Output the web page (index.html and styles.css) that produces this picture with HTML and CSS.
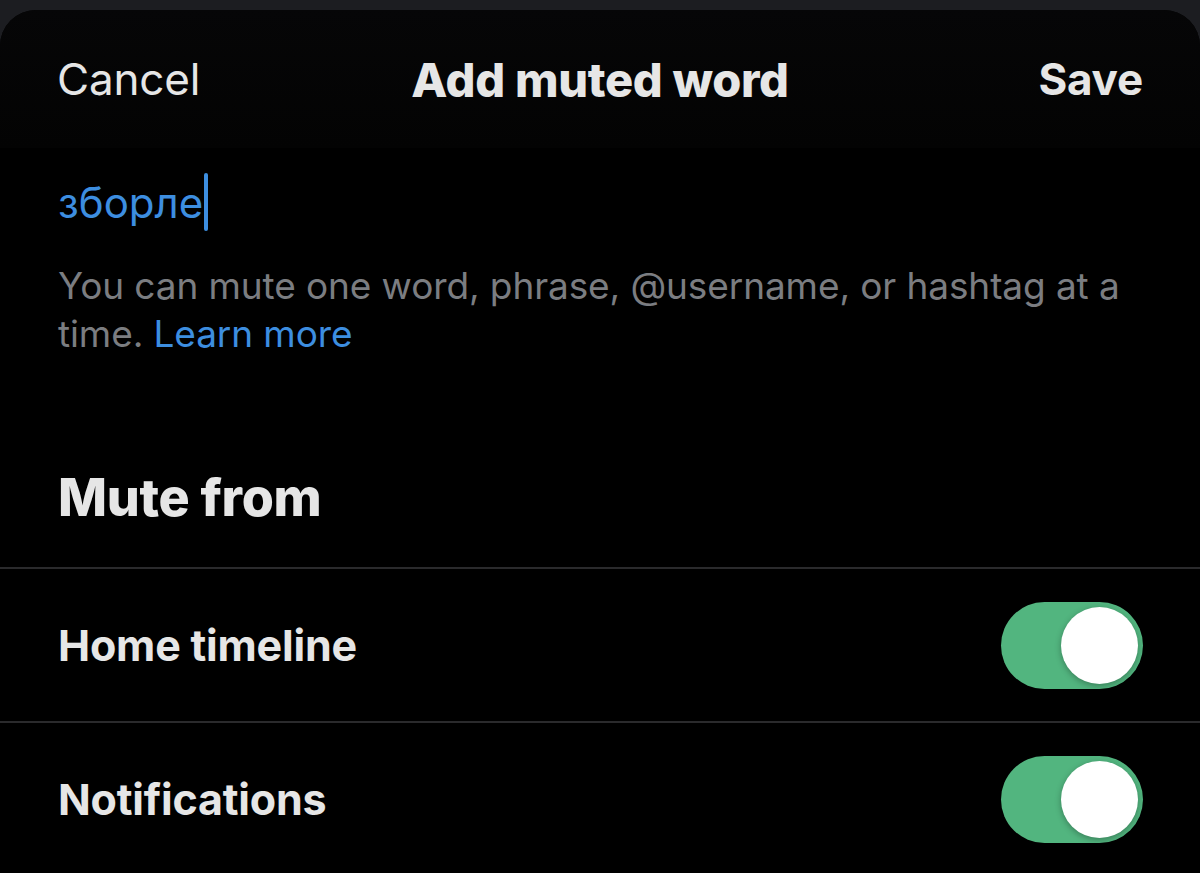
FILE: index.html
```html
<!DOCTYPE html>
<html lang="en">
<head>
<meta charset="utf-8">
<title>Add muted word</title>
<link rel="stylesheet" href="styles.css">
</head>
<body>
<div class="top-strip"></div>
<div class="sheet">
  <header class="header">
    <span class="hdr-btn cancel">Cancel</span>
    <h1 class="title">Add muted word</h1>
    <span class="hdr-btn save">Save</span>
  </header>
  <div class="input-area">
    <div class="input-line"><span class="input-text">зборле</span><span class="caret"></span></div>
    <p class="helper">You can mute one word, phrase, @username, or hashtag at a time. <span class="link">Learn more</span></p>
  </div>
  <h2 class="section-title">Mute from</h2>
  <div class="row">
    <span class="row-label">Home timeline</span>
    <span class="toggle"><span class="knob"></span></span>
  </div>
  <div class="row">
    <span class="row-label">Notifications</span>
    <span class="toggle"><span class="knob"></span></span>
  </div>
</div>
</body>
</html>
```
FILE: styles.css
```css
* { box-sizing: border-box; }
html, body {
  margin: 0;
  padding: 0;
  height: 873px;
  overflow: hidden;
  background: #1c1d21;
  font-family: Inter, "Noto Sans", "Liberation Sans", sans-serif;
}
.top-strip { height: 10px; }
.sheet {
  background: #000;
  border-radius: 36px 36px 0 0;
  height: 863px;
  overflow: hidden;
}
.header {
  height: 138px;
  display: grid;
  grid-template-columns: 1fr auto 1fr;
  align-items: center;
  padding: 0 57px 0 57px;
  background: linear-gradient(#060607, #030303);
}
.hdr-btn {
  font-size: 44px;
  color: #e6e6e6;
  letter-spacing: -0.2px;
}
.cancel { justify-self: start; font-weight: 400; }
.save { justify-self: end; font-weight: 700; }
.title {
  margin: 0;
  font-size: 47px;
  font-weight: 800;
  color: #e6e6e6;
  letter-spacing: -0.3px;
}
.input-area { padding: 0 58px; }
.input-line {
  display: flex;
  align-items: center;
  height: 60px;
  margin-top: 24px;
}
.input-text {
  font-size: 42px;
  color: #3d8ee0;
  letter-spacing: 0;
}
.caret {
  width: 4px;
  height: 58px;
  background: #3d8ee0;
  border-radius: 2px;
  margin-left: 1px;
}
.helper {
  margin: 30px 0 0;
  font-size: 37px;
  line-height: 48px;
  color: #7b7d81;
  letter-spacing: -0.1px;
}
.link { color: #3d8ee0; }
.section-title {
  margin: 108px 0 0;
  padding: 0 58px;
  height: 101px;
  font-size: 52px;
  line-height: 64px;
  font-weight: 800;
  color: #e6e6e6;
  letter-spacing: -0.3px;
}
.row {
  display: flex;
  align-items: center;
  justify-content: space-between;
  height: 154px;
  padding: 0 57px 0 58px;
  border-top: 2px solid #2a2a2c;
}
.row-label {
  font-size: 43px;
  font-weight: 700;
  color: #e6e6e6;
  letter-spacing: -0.2px;
}
.toggle {
  position: relative;
  width: 142px;
  height: 87px;
  border-radius: 44px;
  background: #52b57f;
}
.knob {
  position: absolute;
  right: 5px;
  top: 5px;
  width: 77px;
  height: 77px;
  border-radius: 50%;
  background: #fff;
  box-shadow: 0 2px 6px rgba(0,0,0,0.3);
}
```
